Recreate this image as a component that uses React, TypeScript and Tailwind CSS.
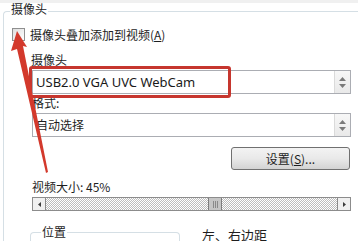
import React from "react";

function Spinner() {
  return (
    <div className="w-[16px] h-full border-l border-[#dadada] bg-gradient-to-b from-[#f7f7f7] to-[#e9e9e9] flex flex-col items-center justify-center gap-[3px]">
      <svg width="7" height="4" viewBox="0 0 7 4"><path d="M3.5 0 L7 4 L0 4 Z" fill="#7a7a7a" /></svg>
      <svg width="7" height="4" viewBox="0 0 7 4"><path d="M0 0 L7 0 L3.5 4 Z" fill="#7a7a7a" /></svg>
    </div>
  );
}

export default function App() {
  return (
    <div className="relative w-[358px] h-[241px] overflow-hidden bg-white text-[12px] leading-[16px] text-[#1e1e1e] font-['Noto_Sans','Noto_Sans_CJK_SC',sans-serif]">
      <div className="h-[3px] bg-[#f0f0f0]" />
      <fieldset className="ml-[3px] w-[400px] h-[260px] border-l border-t border-r-0 border-b-0 border-solid border-[#d5dfe5] rounded-tl-[4px] p-0 m-0">
        <legend className="ml-[6px] px-[1px] leading-[16px] font-['Noto_Sans_CJK_SC',sans-serif]">
          <span className="relative -top-[2px]">摄像头</span>
        </legend>
        <div className="flex flex-col font-['Noto_Sans_CJK_SC',sans-serif]">
          <div className="mt-[9px] flex items-center h-[13px]">
            <div className="ml-[8px] w-[13px] h-[13px] border border-[#8f8f8f] bg-gradient-to-br from-[#dedede] to-white" />
            <span className="ml-[5px] whitespace-nowrap">摄像头叠加添加到视频(<u>A</u>)</span>
          </div>
          <div className="mt-[11px] ml-[27px]">摄像头</div>
          <div className="mt-[2px] ml-[28px] w-[319px] h-[24px] border border-[#abadb3] bg-white flex items-center">
            <div className="flex-1 pl-[3px] text-[13px] leading-[16px] text-[#1a1a1a] font-['Noto_Sans',sans-serif]">USB2.0 VGA UVC WebCam</div>
            <Spinner />
          </div>
          <div className="mt-[1px] ml-[28px]">格式:</div>
          <div className="mt-[2px] ml-[28px] w-[319px] h-[24px] border border-[#abadb3] bg-white flex items-center">
            <div className="flex-1 pl-[3px]">自动选择</div>
            <Spinner />
          </div>
          <div className="mt-[10px] ml-[227px] w-[119px] h-[23px] border border-[#707070] rounded-[3px] bg-gradient-to-b from-[#f3f3f3] via-[#e9e9e9] to-[#d3d3d3] flex items-center justify-center">
            设置(<u>S</u>)...
          </div>
          <div className="mt-[9px] ml-[28px]">视频大小: 45%</div>
          <div className="mt-[2px] ml-[28px] w-[319px] h-[14px] flex">
            <div className="w-[14px] h-full border border-[#8c8c8c] bg-[#f0f0f0] flex items-center justify-center">
              <svg width="3" height="5" viewBox="0 0 3 5"><path d="M3 0 L0 2.5 L3 5 Z" fill="#3c3c3c" /></svg>
            </div>
            <div className="flex-1 flex h-full border-y border-[#8c8c8c] bg-[repeating-conic-gradient(#bdbdbd_0_25%,#ffffff_0_50%)] bg-[length:2px_2px]">
              <div className="w-[162px]" />
              <div className="w-[14px] h-full border-x border-[#7e7e7e] bg-[#c6c6c6] flex items-center justify-center gap-[1px]">
                <div className="w-px h-[7px] bg-[#8a8a8a]" />
                <div className="w-px h-[7px] bg-[#8a8a8a]" />
                <div className="w-px h-[7px] bg-[#8a8a8a]" />
              </div>
            </div>
            <div className="w-[14px] h-full border border-[#8c8c8c] bg-[#f0f0f0] flex items-center justify-center">
              <svg width="3" height="5" viewBox="0 0 3 5"><path d="M0 0 L3 2.5 L0 5 Z" fill="#3c3c3c" /></svg>
            </div>
          </div>
          <div className="mt-[13px] flex">
            <fieldset className="ml-[26px] w-[150px] h-[40px] border-l border-t border-r border-b-0 border-solid border-[#d5dfe5] rounded-t-[4px] p-0 m-0">
              <legend className="ml-[10px] px-[1px] leading-[16px]">位置</legend>
            </fieldset>
            <div className="ml-[22px] mt-[3px] whitespace-nowrap text-[13px]">左、右边距</div>
          </div>
        </div>
      </fieldset>

      <div className="absolute left-[29px] top-[66px] w-[202px] h-[32px] border-[3px] border-[#c6362e] rounded-[3px]" />

      <svg className="absolute left-0 top-0" width="358" height="241" viewBox="0 0 358 241">
        <polygon
          points="17,31 27,47 23,46 48,172 46,173 17,49 11,51"
          fill="#d3392c"
        />
      </svg>
    </div>
  );
}
